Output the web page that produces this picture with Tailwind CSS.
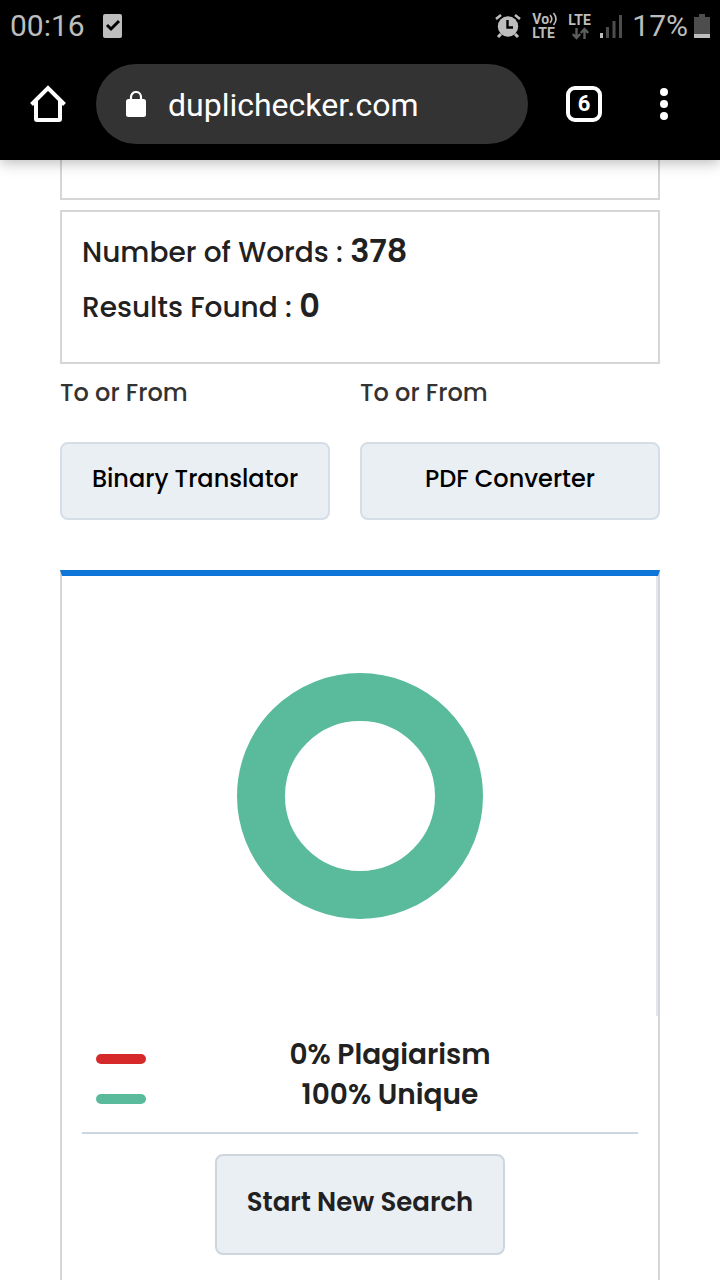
<!DOCTYPE html>
<html lang="en">
<head>
  <meta charset="UTF-8" />
  <meta name="viewport" content="width=device-width, initial-scale=1.0" />
  <title>Plagiarism Checker</title>
  <script src="https://cdn.jsdelivr.net/npm/@tailwindcss/browser@4"></script>
</head>
<body class="min-h-screen flex flex-col bg-white text-[#212121] font-[Poppins,Inter,sans-serif]">

  <!-- Browser chrome -->
  <header class="relative z-10 bg-black pb-4 shadow-[0_2px_14px_rgba(0,0,0,0.3)] font-[Roboto,sans-serif]">
    <div class="h-[52px] flex items-center px-[10px] text-[30px] leading-none text-[#bdbdbd]">
      <span>00:16</span>
      <svg class="ml-[18px]" width="19" height="24" viewBox="0 0 19 24">
        <rect width="19" height="24" rx="2" fill="#bdbdbd" />
        <path d="M4 11l4 4 8-8" fill="none" stroke="#000" stroke-width="3" />
      </svg>

      <div class="ml-auto flex items-center">
        <!-- Alarm -->
        <svg width="26" height="24" viewBox="0 0 26 24" fill="none" stroke="#bdbdbd">
          <path d="M1 5l5-4M25 5l-5-4" stroke-width="2.6" />
          <path d="M6 20l-3 3M20 20l3 3" stroke-width="3" />
          <circle cx="13" cy="12.500" r="10.200" fill="#bdbdbd" stroke="none" />
          <path d="M12.500 6v7.500h5.500" stroke="#000" stroke-width="2.400" />
        </svg>
        <div class="ml-[11px] w-6 text-[14px] leading-[14px] font-bold">
          <div class="flex items-center">Vo<svg class="shrink-0" width="8" height="14" viewBox="0 0 8 14" fill="none" stroke="#bdbdbd" stroke-width="1.600"><path d="M1 3q3.500 4 0 8M4.500 1q5 6 0 12" /></svg></div>
          <div>LTE</div>
        </div>
        <div class="ml-3 w-6 text-[14px] leading-[14px] font-bold">
          <div>LTE</div>
          <svg class="ml-1" width="17" height="13" viewBox="0 0 17 13" fill="none" stroke="#5c5c5c" stroke-width="2.400">
            <path d="M4.500 1v10M.8 7l3.700 4 3.700-4M12.500 12V2M8.800 6l3.700-4 3.700 4" />
          </svg>
        </div>
        <svg class="ml-2" width="22" height="23" viewBox="0 0 22 23">
          <rect y="18" width="3" height="5" fill="#bdbdbd" />
          <path d="M6 12h3v11H6zM12.500 6h3v17h-3zM19 0h3v23h-3z" fill="#4d4d4d" />
        </svg>
        <span class="ml-[10px]">17%</span>
        <svg class="ml-[6px]" width="16" height="24" viewBox="0 0 16 24">
          <path d="M5 0h6v3h5v17H0V3h5z" fill="#4d4d4d" />
          <path d="M0 20h16v4H0z" fill="#bdbdbd" />
        </svg>
      </div>
    </div>

    <div class="mt-3 flex items-center pl-[30px] pr-[52px] text-white">
      <button aria-label="Home">
        <svg width="36" height="38" viewBox="0 0 36 38" fill="none" stroke="#fff" stroke-width="4">
          <path d="M1.500 19.500L18 3l16.500 16.500" />
          <path d="M6 16v18q0 1 1 1h22q1 0 1-1V16" />
        </svg>
      </button>
      <div class="ml-[30px] flex-1 min-w-0 h-20 rounded-full bg-[#333333] flex items-center px-[30px]">
        <svg class="shrink-0" width="20" height="26" viewBox="0 0 20 26">
          <rect y="8" width="20" height="18" rx="2.500" fill="#fff" />
          <path d="M5 9V6a5 5 0 0 1 10 0v3" fill="none" stroke="#fff" stroke-width="2.200" />
        </svg>
        <input type="text" aria-label="Address" value="duplichecker.com" class="ml-[22px] flex-1 min-w-0 bg-transparent pt-0.5 text-[32px] outline-none" />
      </div>
      <button aria-label="Tabs" class="ml-[38px] size-9 rounded-[9px] border-4 border-white text-[22px] leading-none font-bold">6</button>
      <button aria-label="Menu" class="ml-[58px]">
        <svg width="8" height="32" viewBox="0 0 8 32" fill="#fff">
          <circle cx="4" cy="4" r="4" /><circle cx="4" cy="16" r="4" /><circle cx="4" cy="28" r="4" />
        </svg>
      </button>
    </div>
  </header>

  <main class="flex-1 flex flex-col px-[60px]">
    <div class="h-10 border-2 border-t-0 border-[#d6d6d6]"></div>

    <!-- Summary -->
    <section class="mt-[10px] border-2 border-[#d6d6d6] px-5 pt-[13px] pb-[27px] text-[28px] leading-[55px] font-medium">
      <p>Number of Words : <span class="text-[32px] leading-none font-semibold">378</span></p>
      <p>Results Found : <span class="text-[32px] leading-none font-semibold">0</span></p>
    </section>

    <!-- Other tools -->
    <section class="mt-[11px] grid grid-cols-2 text-[24px] leading-9 font-medium">
      <div class="pr-[30px]">
        <p class="text-[#333333]">To or From</p>
        <a href="#" class="mt-[31px] h-[78px] flex items-center justify-center rounded-lg border-2 border-[#d5dde7] bg-[#eaeff4] pb-1 text-black">Binary Translator</a>
      </div>
      <div>
        <p class="text-[#333333]">To or From</p>
        <a href="#" class="mt-[31px] h-[78px] flex items-center justify-center rounded-lg border-2 border-[#d5dde7] bg-[#eaeff4] pb-1 text-black">PDF Converter</a>
      </div>
    </section>

    <!-- Result -->
    <section class="mt-[50px] flex-1 border-2 border-b-0 border-t-6 border-[#d6d6d6] border-t-[#0f75d9] pb-[25px]">
      <div class="h-[440px] flex items-center justify-center border-r-2 border-[#e2e6f0] pl-0.5">
        <svg width="246" height="246" viewBox="0 0 246 246">
          <circle cx="123" cy="123" r="99" fill="none" stroke="#59bb9c" stroke-width="48" />
        </svg>
      </div>
      <div class="px-5 pt-[19px]">
        <ul class="border-b-2 border-[#cdd6df] pl-[14px] pb-[17px] text-[28px] leading-10 font-semibold text-center">
          <li class="flex items-center">
            <span class="mt-2 h-[10px] w-[50px] rounded-full bg-[#d62a2a]"></span>
            <span class="flex-1 pr-1">0% Plagiarism</span>
          </li>
          <li class="flex items-center">
            <span class="mt-2 h-[10px] w-[50px] rounded-full bg-[#59bb9c]"></span>
            <span class="flex-1 pr-1">100% Unique</span>
          </li>
        </ul>
        <button class="mt-5 mx-auto block h-[101px] w-[290px] rounded-lg border-2 border-[#cdd6df] bg-[#eaeff4] pb-1 text-[26px] font-semibold">Start New Search</button>
      </div>
    </section>
  </main>
</body>
</html>
